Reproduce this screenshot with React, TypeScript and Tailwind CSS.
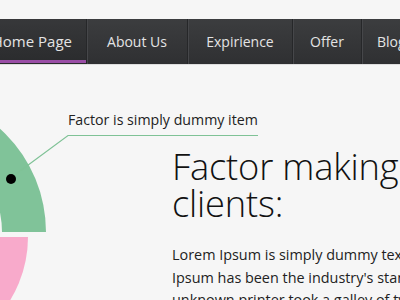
import React from "react";

const font = { fontFamily: '"Open Sans", "Noto Sans", sans-serif' };

export default function App() {
  return (
    <div
      className="relative w-[400px] h-[300px] overflow-hidden bg-[#f6f6f6]"
      style={font}
    >
      {/* nav */}
      <div className="mt-[19px] h-[45px] flex bg-gradient-to-b from-[#3c3d3f] to-[#2f3032] text-[#e4e4e4] text-[14px] whitespace-nowrap">
        <div className="relative shrink-0 -ml-[34px] w-[120px] h-full flex items-center justify-end pr-[14px] text-[15px] bg-gradient-to-b from-[#37383a] to-[#2a2b2d]">
          Home Page
          <div className="absolute left-0 right-0 bottom-[1px] h-[3px] bg-[#9a4ea6]" />
        </div>
        <div className="shrink-0 w-[101px] h-full flex items-center justify-center border-l border-[#262729] shadow-[inset_1px_0_0_#46474a]">
          About Us
        </div>
        <div className="shrink-0 w-[105px] h-full flex items-center justify-center border-l border-[#262729] shadow-[inset_1px_0_0_#46474a]">
          Expirience
        </div>
        <div className="shrink-0 w-[69px] h-full flex items-center justify-center border-l border-[#262729] shadow-[inset_1px_0_0_#46474a]">
          Offer
        </div>
        <div className="shrink-0 w-[80px] h-full flex items-center pl-[15px] border-l border-[#262729] shadow-[inset_1px_0_0_#46474a]">
          Blog
        </div>
      </div>
      <div className="h-px bg-[#dedede]" />

      {/* content */}
      <div className="relative h-[235px]">
        <svg
          className="absolute left-0 top-0"
          width="260"
          height="235"
          viewBox="0 0 260 235"
        >
          <path
            d="M -93 28 A 139 139 0 0 1 46 167 L 2 167 A 95 95 0 0 0 -93 72 Z"
            fill="#80c399"
          />
          <path
            d="M 28 172 A 121 121 0 0 1 -93 293 L -93 172 Z"
            fill="#f8aacb"
          />
          <polyline
            points="258,70.5 68,70.5 16,109"
            fill="none"
            stroke="#7fc296"
            strokeWidth="1.2"
          />
          <circle cx="11" cy="114" r="5" fill="#000" />
        </svg>
        <div className="absolute left-[68px] top-[46px] text-[14.2px] leading-[18px] text-[#222] whitespace-nowrap">
          Factor is simply dummy item
        </div>

        <div className="pl-[172px] pt-[83px] whitespace-nowrap">
          <div className="text-[36.3px] leading-[37px] font-light text-[#111] tracking-[-0.2px]">
            <div>Factor making happy</div>
            <div>clients:</div>
          </div>
          <div className="mt-[22px] text-[14.4px] leading-[22.5px] text-[#222]">
            <div>Lorem Ipsum is simply dummy text of the printing and</div>
            <div>Ipsum has been the industry's standard dummy text ever</div>
            <div>unknown printer took a galley of type and scrambled it</div>
          </div>
        </div>
      </div>
    </div>
  );
}
